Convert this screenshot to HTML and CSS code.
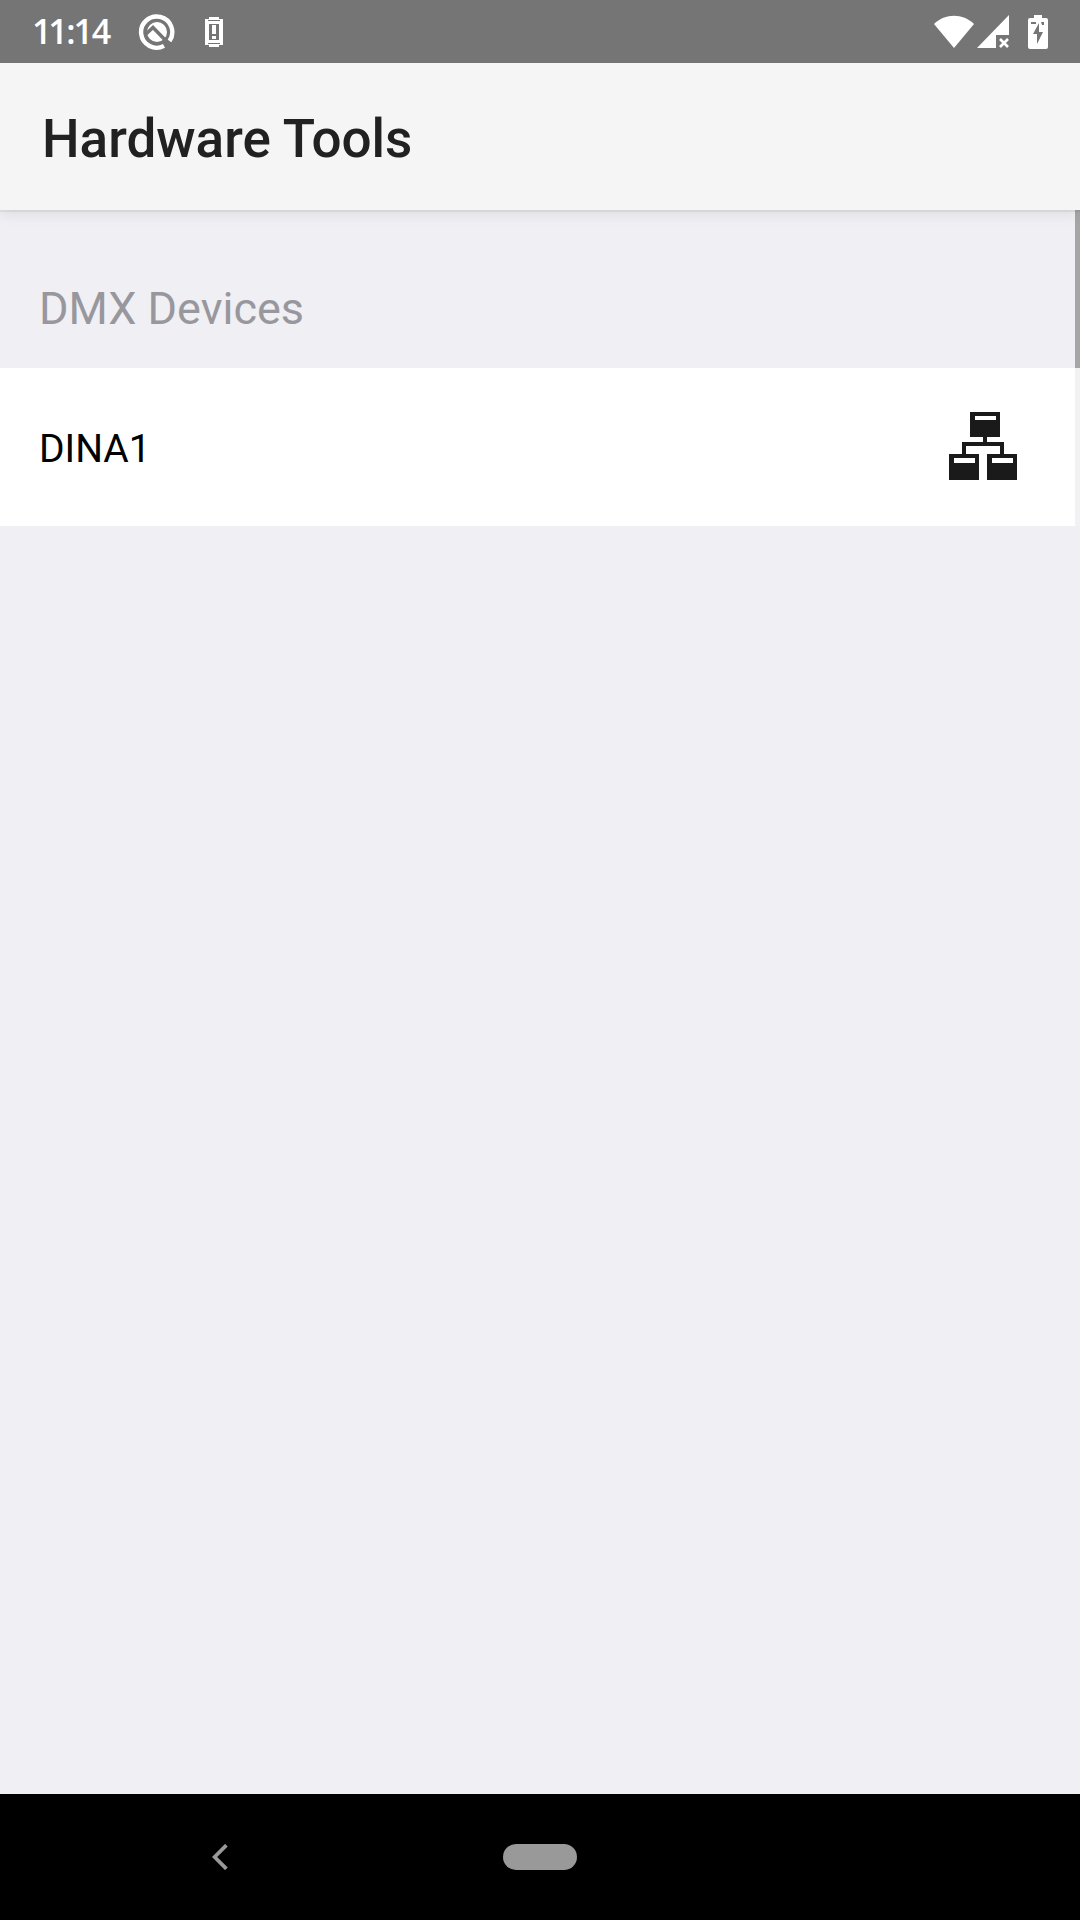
FILE: index.html
```html
<!DOCTYPE html>
<html lang="en">

<head>
    <meta charset="UTF-8">
    <meta name="viewport" content="width=device-width, initial-scale=1.0">
    <title>Hardware Tools</title>
    <link rel="stylesheet" href="styles.css">
</head>

<body>
    <div class="status-bar">
        <span class="time">11:14</span>
        <svg class="icon-q" width="38" height="38" viewBox="0 0 38 38">
            <path d="M31.5 28 A15.6 15.6 0 1 0 26 32.9" fill="none" stroke="#fff" stroke-width="4.4" />
            <circle cx="19" cy="19" r="10" fill="#fff" />
            <path d="M8 21 L15 14.5 L33 33" fill="none" stroke="#757575" stroke-width="3.4" />
            <path d="M27.5 28.5 L31 32" fill="none" stroke="#757575" stroke-width="3.6" />
        </svg>
        <svg class="icon-watch" width="18" height="30" viewBox="0 0 18 30">
            <path fill="#fff" fill-rule="evenodd" d="M0 2h18v26h-18z M4 7v16h10v-16z" />
            <path fill="#757575" d="M3 3h12v1h-12z M3 26h12v1h-12z" />
            <path fill="#fff" d="M4 0h10v3h-10z M4 27h10v3h-10z M7 8h4v9h-4z M7 19h4v3h-4z" />
        </svg>
        <div class="status-right">
            <svg width="40" height="34" viewBox="0 0 40 34">
                <path fill="#fff" d="M20 33 L0 9 C11 -2 29 -2 40 9 Z" />
            </svg>
            <svg class="icon-signal" width="33" height="34" viewBox="0 0 33 34">
                <path fill="#fff" d="M0 33 L32 0 V20 H19 V33 Z" />
                <path d="M23 24 L31 32 M31 24 L23 32" stroke="#fff" stroke-width="2.6" />
            </svg>
            <svg class="icon-battery" width="20" height="34" viewBox="0 0 20 34">
                <path fill="#fff" d="M6 0h8v3h4q2 0 2 2v27q0 2 -2 2h-16q-2 0 -2 -2v-27q0 -2 2 -2h4z" />
                <path fill="#757575" d="M11 8 L5 19 H9 V29 L15 17 H11 Z M3 7h5v2h-5z M13 7h3v3h-2z" />
            </svg>
        </div>
    </div>
    <header class="header">
        <h1 class="title">Hardware Tools</h1>
    </header>
    <main class="content">
        <div class="list">
            <h2 class="section-title">DMX Devices</h2>
            <div class="item">
                <span class="item-name">DINA1</span>
                <svg width="68" height="68" viewBox="0 0 68 68" fill="#1a1a1a" fill-rule="evenodd">
                    <path d="M21 0h30v25h-30z M26 4v4h21v-4z" />
                    <path d="M34 25h4v5h17v12h-4v-8h-34v8h-4v-12h21z" />
                    <path d="M0 42h30v26h-30z M5 46v5h21v-5z" />
                    <path d="M38 42h30v26h-30z M43 46v5h21v-5z" />
                </svg>
            </div>
        </div>
        <div class="scrollbar">
            <div class="thumb"></div>
            <div class="track"></div>
        </div>
    </main>
    <nav class="nav-bar">
        <button class="back" aria-label="Back">
            <svg width="16" height="26" viewBox="0 0 16 26">
                <path d="M14.4 1.2 L2.6 13 L14.4 24.8" fill="none" stroke="#999" stroke-width="3.8" />
            </svg>
        </button>
        <button class="home" aria-label="Home"></button>
    </nav>
</body>

</html>
```

FILE: styles.css
```css
html,
body {
    padding: 0;
    margin: 0;
}

body {
    display: flex;
    flex-direction: column;
    min-height: 100vh;
    background-color: #efeff4;
    font-family: Roboto, sans-serif;
}

svg {
    display: block;
    flex: none;
}

.status-bar {
    display: flex;
    align-items: center;
    box-sizing: border-box;
    height: 63px;
    padding: 0 32px 0 34px;
    background-color: #757575;
}

.time {
    width: 76px;
    color: #fff;
    font-family: "Open Sans", "Noto Sans", sans-serif;
    font-size: 34px;
    font-variant-numeric: proportional-nums;
    font-weight: 600;
    line-height: 63px;
}

.icon-q {
    margin-left: 28px;
}

.icon-watch {
    margin-left: 29px;
}

.status-right {
    display: flex;
    align-items: center;
    margin-left: auto;
}

.icon-signal {
    margin-left: 3px;
}

.icon-battery {
    margin-left: 18px;
}

.header {
    position: relative;
    padding: 45px 42px 39px;
    background-color: #f5f5f5;
    box-shadow: 0 2px 1px rgba(0, 0, 0, 0.06), 0 4px 14px rgba(0, 0, 0, 0.08);
    clip-path: inset(0 0 -24px);
}

.title {
    margin: 0;
    color: #212121;
    font-size: 53px;
    font-weight: 500;
    line-height: 63px;
}

.content {
    display: flex;
    flex: 1;
}

.list {
    flex: 1;
}

.section-title {
    margin: 0;
    padding: 69px 39px 29px;
    color: #98979d;
    font-size: 45px;
    font-weight: 400;
    line-height: 60px;
}

.item {
    display: flex;
    align-items: center;
    justify-content: space-between;
    padding: 44px 58px 46px 39px;
    background-color: #fff;
}

.item-name {
    padding-top: 6px;
    color: #000;
    font-size: 39px;
    line-height: 60px;
}

.scrollbar {
    width: 5px;
}

.thumb {
    height: 158px;
    background-color: #a6a6a6;
}

.track {
    height: 158px;
    background-color: #f2f2f5;
}

.nav-bar {
    display: flex;
    align-items: center;
    justify-content: center;
    position: relative;
    height: 126px;
    background-color: #000;
}

.nav-bar button {
    padding: 0;
    border: none;
}

.back {
    position: absolute;
    left: 212px;
    background: none;
}

.home {
    width: 74px;
    height: 26px;
    border-radius: 13px;
    background-color: #999;
}
```
